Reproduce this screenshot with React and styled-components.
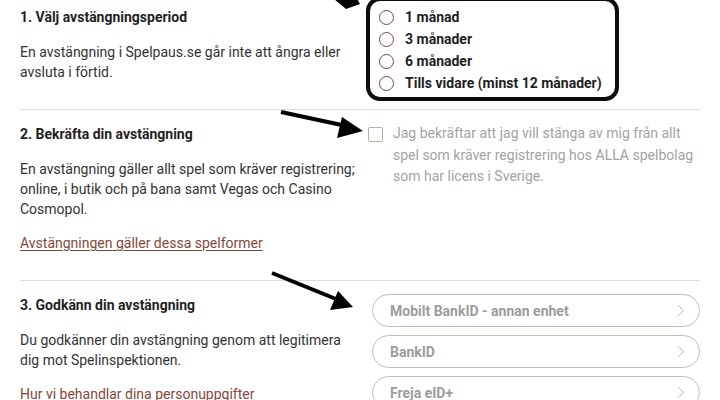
import React from 'react'
import styled, { createGlobalStyle } from 'styled-components'

const colors = {
  ink: '#1f1f1f',
  text: '#333333',
  muted: '#a3a3a3',
  link: '#84483a',
  rule: '#dcdcdc',
  radio: '#7c4b3c',
  outline: '#c9bbb0',
}

const GlobalStyle = createGlobalStyle`
  body {
    margin: 0;
    background: #ffffff;
    font-family: Roboto, "Noto Sans", sans-serif;
    overflow: hidden;
  }
`

const Page = styled.div`
  position: relative;
  width: 680px;
  margin: -7px 0 0 20px;
`

const Section = styled.section`
  display: grid;
  grid-template-columns: 348px 332px;
  align-items: start;
  padding: 14px 0 27px;
  border-bottom: ${props => (props.last ? 'none' : `1px solid ${colors.rule}`)};
`

const Column = styled.div`
  min-width: 0;
`

const Heading = styled.h3`
  margin: 0 0 15px;
  font-size: 14px;
  line-height: 20px;
  font-weight: 700;
  color: ${colors.ink};
`

const Text = styled.p`
  margin: 0;
  max-width: 336px;
  font-size: 14px;
  line-height: 20px;
  color: ${colors.text};
`

const Link = styled.a`
  display: block;
  width: fit-content;
  margin-top: 14px;
  font-size: 14px;
  line-height: 20px;
  color: ${colors.link};
  text-decoration: underline;
  text-underline-offset: 2px;
`

const PeriodBox = styled.div`
  width: 228px;
  margin: -10px 0 -20px -2px;
  padding: 5px 8px 3px 9px;
  border: 4px solid #0d0d0d;
  border-radius: 14px;
`

const Option = styled.label`
  display: flex;
  align-items: center;
  gap: 11px;
  height: 22px;
  font-size: 14px;
  font-weight: 700;
  white-space: nowrap;
  color: ${colors.ink};
`

const RadioDot = styled.span`
  width: 13px;
  height: 13px;
  flex: none;
  border: 1.5px solid ${colors.radio};
  border-radius: 50%;
`

const Confirm = styled.label`
  display: flex;
  gap: 10px;
  padding-top: 3px;
  width: 336px;
`

const Checkbox = styled.span`
  width: 13px;
  height: 13px;
  flex: none;
  border: 1.5px solid #bcaea5;
  border-radius: 2px;
`

const ConfirmText = styled.span`
  font-size: 14px;
  line-height: 21.5px;
  margin-top: -4px;
  color: ${colors.muted};
`

const Methods = styled.div`
  display: flex;
  flex-direction: column;
  gap: 8px;
  margin: -1px 0 0 4px;
`

const MethodButton = styled.button`
  display: flex;
  align-items: center;
  justify-content: space-between;
  height: 33px;
  padding: 0 14px 0 17px;
  background: #ffffff;
  border: 1.5px solid ${colors.outline};
  border-radius: 17px;
  font-family: inherit;
  font-size: 14px;
  font-weight: 700;
  color: #9c9c9c;
`

const Arrows = styled.svg`
  position: absolute;
  left: -20px;
  top: 7px;
  pointer-events: none;
`

const Chevron = () => (
  <svg width="8" height="13" viewBox="0 0 8 13" fill="none">
    <path d="M1.5 1.5 L6.5 6.5 L1.5 11.5" stroke="#b5b5b5" strokeWidth="1" />
  </svg>
)

const periods = ['1 månad', '3 månader', '6 månader', 'Tills vidare (minst 12 månader)']
const methods = ['Mobilt BankID - annan enhet', 'BankID', 'Freja eID+']

export default function App() {
  return (
    <>
      <GlobalStyle />
      <Page>
        <Section>
          <Column>
            <Heading>1. Välj avstängningsperiod</Heading>
            <Text>En avstängning i Spelpaus.se går inte att ångra eller avsluta i förtid.</Text>
          </Column>
          <PeriodBox>
            {periods.map(p => (
              <Option key={p}>
                <RadioDot />
                {p}
              </Option>
            ))}
          </PeriodBox>
        </Section>

        <Section>
          <Column>
            <Heading>2. Bekräfta din avstängning</Heading>
            <Text>
              En avstängning gäller allt spel som kräver registrering; online, i butik och på bana samt Vegas och Casino Cosmopol.
            </Text>
            <Link href="#">Avstängningen gäller dessa spelformer</Link>
          </Column>
          <Confirm>
            <Checkbox />
            <ConfirmText>
              Jag bekräftar att jag vill stänga av mig från allt spel som kräver registrering hos ALLA spelbolag som har licens i Sverige.
            </ConfirmText>
          </Confirm>
        </Section>

        <Section last>
          <Column>
            <Heading>3. Godkänn din avstängning</Heading>
            <Text>Du godkänner din avstängning genom att legitimera dig mot Spelinspektionen.</Text>
            <Link href="#">Hur vi behandlar dina personuppgifter</Link>
          </Column>
          <Methods>
            {methods.map(m => (
              <MethodButton key={m}>
                {m}
                <Chevron />
              </MethodButton>
            ))}
          </Methods>
        </Section>

        {/* pointer arrows drawn over the form */}
        <Arrows width="720" height="400" viewBox="0 0 720 400">
          <polygon points="334,-1 356,-3 360,4 346,9" fill="#000" />
          <line x1="281" y1="112" x2="344" y2="125.5" stroke="#000" strokeWidth="4" />
          <polygon points="363,131 342,117 337,138" fill="#000" />
          <line x1="272" y1="273" x2="336" y2="299" stroke="#000" strokeWidth="4" />
          <polygon points="353,307 338,291 330,310" fill="#000" />
        </Arrows>
      </Page>
    </>
  )
}
